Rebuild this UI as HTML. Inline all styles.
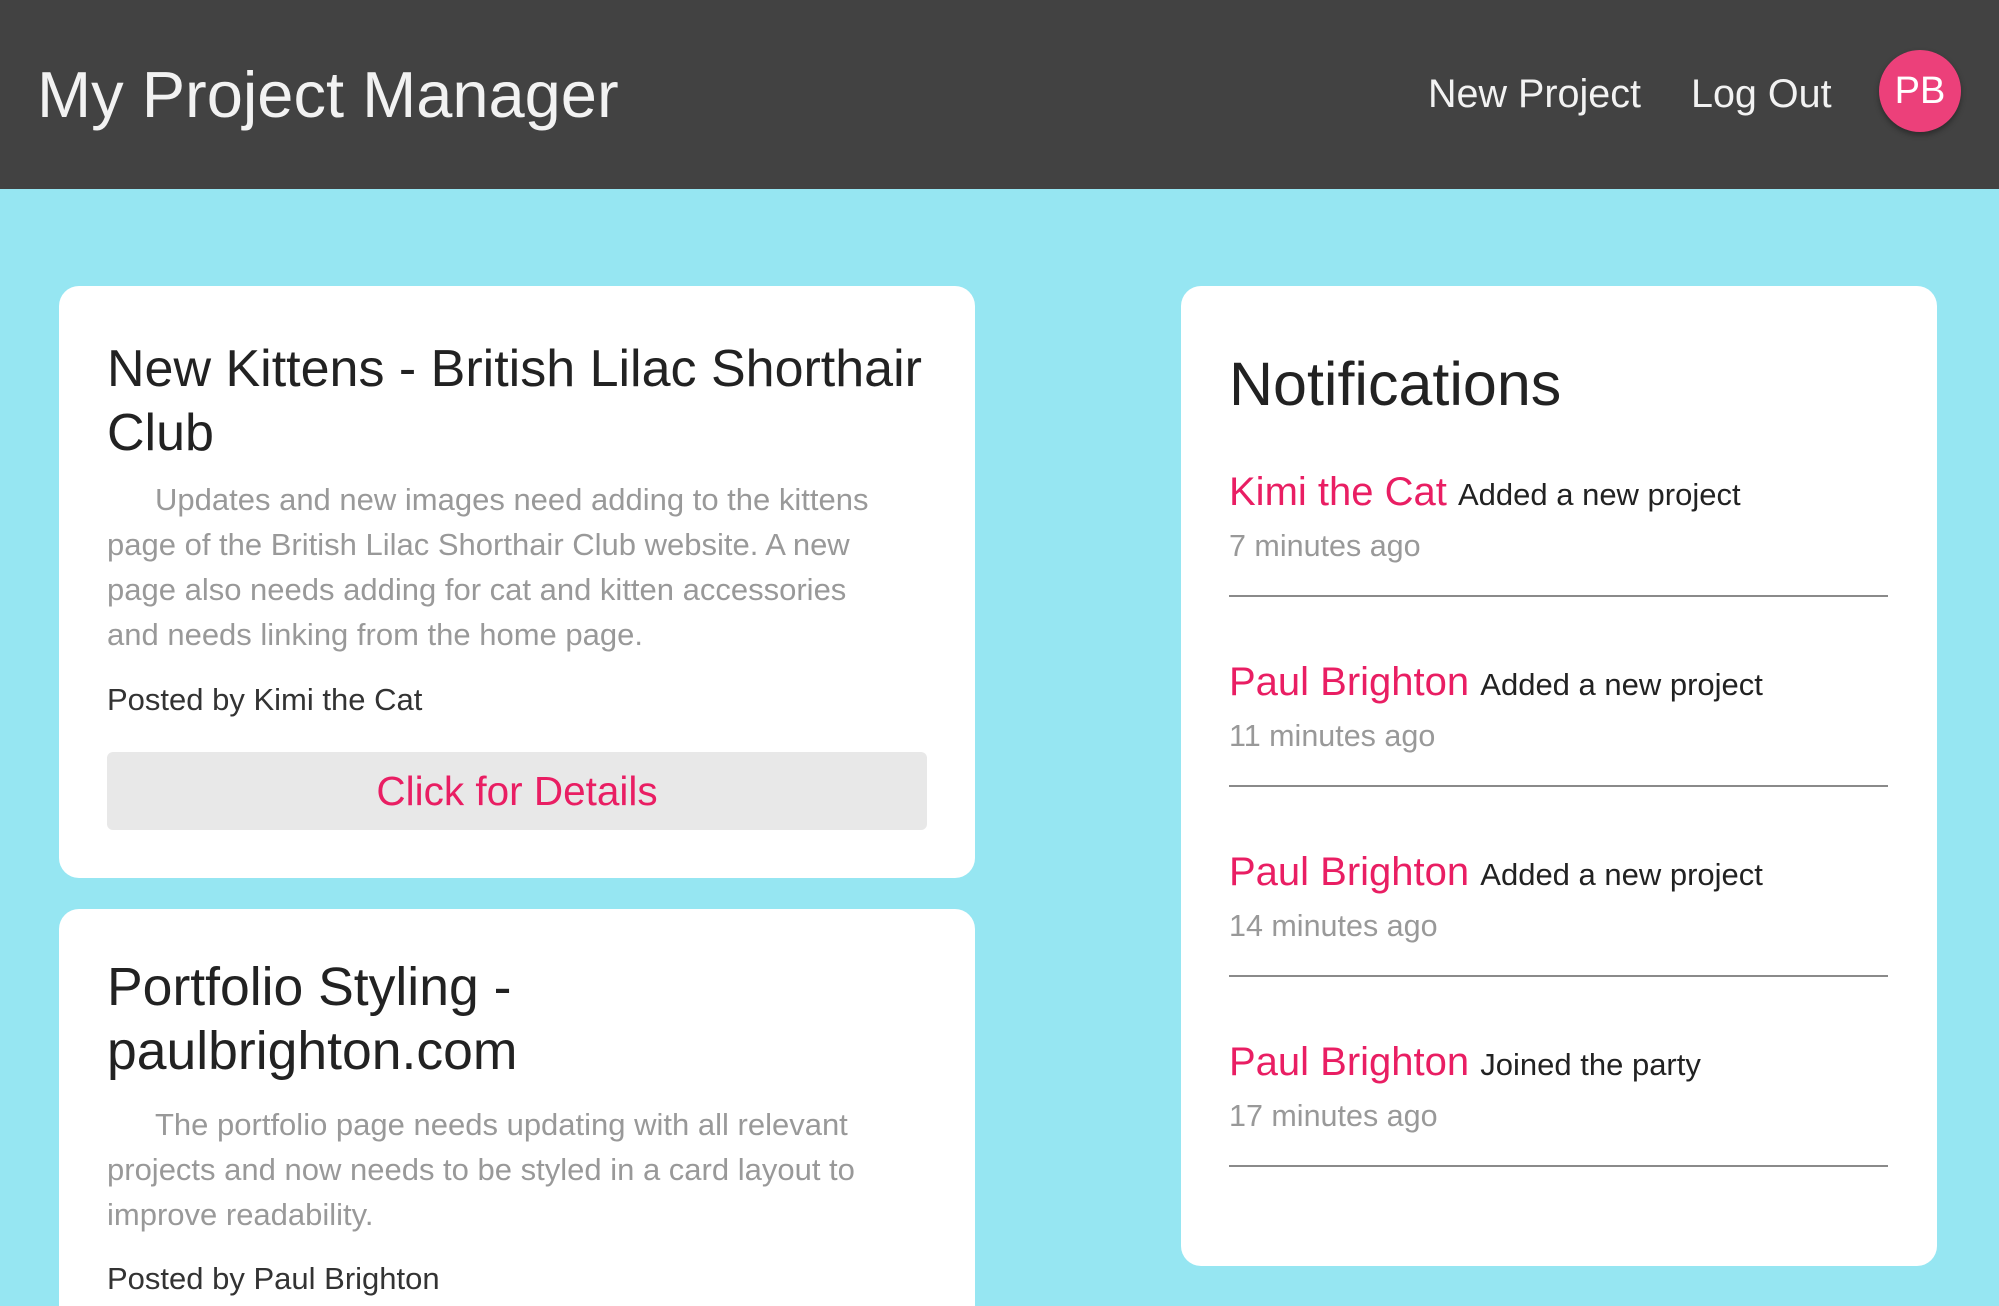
<!DOCTYPE html>
<html style="overflow:hidden;width:1999px;height:1306px"><head><meta charset="utf-8"><style>
*{margin:0;padding:0;box-sizing:border-box}
body{width:1999px;height:1306px;overflow:hidden;background:#96e6f2;font-family:"Liberation Sans",sans-serif;position:relative}
.a{position:absolute;white-space:nowrap}
.hdr{position:absolute;left:0;top:0;width:1999px;height:189px;background:#424242}
.card{position:absolute;background:#fff;border-radius:20px}
.t{font-size:52px;line-height:64px;color:#222;left:107px}
.d{font-size:31px;line-height:45px;color:#999;left:107px;white-space:normal;width:790px;text-indent:48px}
.p{font-size:31px;line-height:40px;color:#333;left:107px}
.n{font-size:40px;line-height:50px;color:#e91e63;left:1229px}
.n span{font-size:31px;color:#222}
.tm{font-size:30.5px;line-height:40px;color:#999;left:1229px}
.hr{position:absolute;left:1229px;width:659px;height:2px;background:#8a8a8a}
</style></head><body>
<div class="hdr"></div>
<div class="a" style="left:37px;top:55px;font-size:65px;line-height:80px;color:#f2f2f2">My Project Manager</div>
<div class="a" style="left:1428px;top:69px;font-size:39.5px;line-height:50px;color:#f2f2f2">New Project</div>
<div class="a" style="left:1691px;top:69px;font-size:39.5px;line-height:50px;color:#f2f2f2">Log Out</div>
<div class="a" style="left:1879px;top:50px;width:82px;height:82px;border-radius:50%;background:#ec407a;box-shadow:0 3px 6px rgba(0,0,0,.35);color:#fff;font-size:38px;line-height:82px;text-align:center">PB</div>

<div class="card" style="left:59px;top:286px;width:916px;height:592px"></div>
<div class="a t" style="top:337px">New Kittens - British Lilac Shorthair<br>Club</div>
<div class="a d" style="top:477px">Updates and new images need adding to the kittens page of the British Lilac Shorthair Club website. A new page also needs adding for cat and kitten accessories and needs linking from the home page.</div>
<div class="a p" style="top:680px">Posted by Kimi the Cat</div>
<div class="a" style="left:107px;top:752px;width:820px;height:78px;background:#e8e8e8;border-radius:6px;color:#e91e63;font-size:40.5px;line-height:78px;text-align:center">Click for Details</div>

<div class="card" style="left:59px;top:909px;width:916px;height:420px"></div>
<div class="a t" style="top:956px;font-size:53.5px">Portfolio Styling -<br>paulbrighton.com</div>
<div class="a d" style="top:1102px">The portfolio page needs updating with all relevant projects and now needs to be styled in a card layout to improve readability.</div>
<div class="a p" style="top:1259px">Posted by Paul Brighton</div>

<div class="card" style="left:1181px;top:286px;width:756px;height:980px"></div>
<div class="a" style="left:1229px;top:349px;font-size:61px;line-height:70px;color:#222">Notifications</div>

<div class="a n" style="top:467px">Kimi the Cat <span>Added a new project</span></div>
<div class="a tm" style="top:526px">7 minutes ago</div>
<div class="hr" style="top:595px"></div>

<div class="a n" style="top:657px">Paul Brighton <span>Added a new project</span></div>
<div class="a tm" style="top:716px">11 minutes ago</div>
<div class="hr" style="top:785px"></div>

<div class="a n" style="top:847px">Paul Brighton <span>Added a new project</span></div>
<div class="a tm" style="top:906px">14 minutes ago</div>
<div class="hr" style="top:975px"></div>

<div class="a n" style="top:1037px">Paul Brighton <span>Joined the party</span></div>
<div class="a tm" style="top:1096px">17 minutes ago</div>
<div class="hr" style="top:1165px"></div>
</body></html>
